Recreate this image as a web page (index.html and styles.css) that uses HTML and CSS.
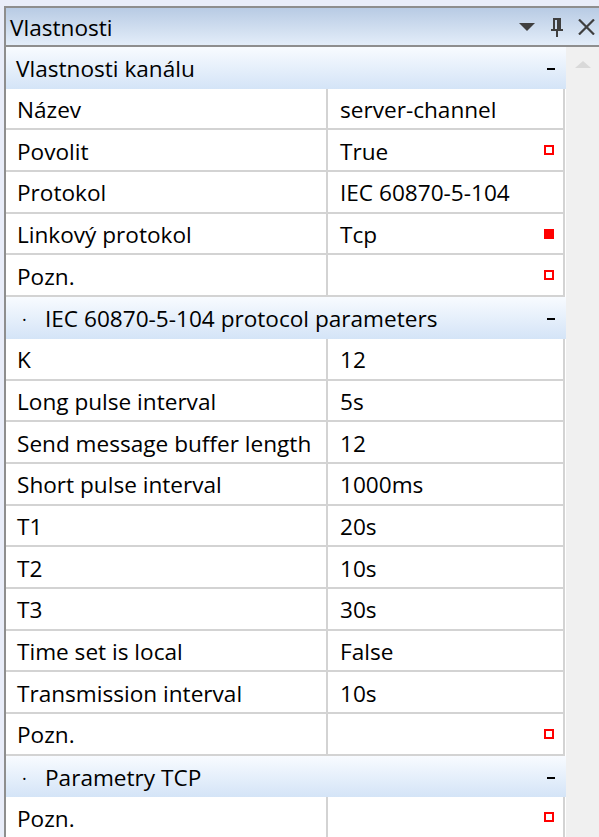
FILE: index.html
```html
<!DOCTYPE html>
<html>
<head>
<meta charset="utf-8">
<link rel="stylesheet" href="styles.css">
</head>
<body>
<div class="window">
  <div class="titlebar">
    <span class="title">Vlastnosti</span>
    <div class="tools">
      <svg class="tool-drop" width="16" height="9" viewBox="0 0 16 9"><path d="M0 0H16L8 8Z" fill="#3f3f3f"/></svg>
      <svg class="tool-pin" width="16" height="20" viewBox="0 0 16 20"><path d="M4 1H12M5 1V12M11 1V12M2 12H14M8 12V19" stroke="#3f3f3f" stroke-width="2" fill="none"/><path d="M9 2V11" stroke="#3f3f3f" stroke-width="2"/></svg>
      <svg class="tool-close" width="17" height="16" viewBox="0 0 17 16"><path d="M1 0.5L16 15.5M16 0.5L1 15.5" stroke="#3f3f3f" stroke-width="2.2"/></svg>
    </div>
  </div>
  <div class="body">
    <div class="grid">
      <div class="cat"><span class="cat-text">Vlastnosti kanálu</span><span class="minus"></span></div>
      <div class="row"><div class="name">Název</div><div class="value">server-channel</div></div>
      <div class="row"><div class="name">Povolit</div><div class="value">True<span class="mark"></span></div></div>
      <div class="row"><div class="name">Protokol</div><div class="value">IEC 60870-5-104</div></div>
      <div class="row"><div class="name">Linkový protokol</div><div class="value">Tcp<span class="mark filled"></span></div></div>
      <div class="row"><div class="name">Pozn.</div><div class="value"><span class="mark"></span></div></div>
      <div class="cat sub"><span class="dot">·</span><span class="cat-text">IEC 60870-5-104 protocol parameters</span><span class="minus"></span></div>
      <div class="row"><div class="name">K</div><div class="value">12</div></div>
      <div class="row"><div class="name">Long pulse interval</div><div class="value">5s</div></div>
      <div class="row"><div class="name">Send message buffer length</div><div class="value">12</div></div>
      <div class="row"><div class="name">Short pulse interval</div><div class="value">1000ms</div></div>
      <div class="row"><div class="name">T1</div><div class="value">20s</div></div>
      <div class="row"><div class="name">T2</div><div class="value">10s</div></div>
      <div class="row"><div class="name">T3</div><div class="value">30s</div></div>
      <div class="row"><div class="name">Time set is local</div><div class="value">False</div></div>
      <div class="row"><div class="name">Transmission interval</div><div class="value">10s</div></div>
      <div class="row"><div class="name">Pozn.</div><div class="value"><span class="mark"></span></div></div>
      <div class="cat sub"><span class="dot">·</span><span class="cat-text">Parametry TCP</span><span class="minus"></span></div>
      <div class="row"><div class="name">Pozn.</div><div class="value"><span class="mark"></span></div></div>
    </div>
    <div class="scroll"><div class="arrow"></div></div>
  </div>
</div>
</body>
</html>
```
FILE: styles.css
```css
html, body {
  margin: 0;
  padding: 0;
  background: #e9edf9;
  width: 599px;
  height: 837px;
  overflow: hidden;
}
body {
  font-family: "Open Sans", "Noto Sans", sans-serif;
  font-size: 22.6px;
  color: #000;
}
.window {
  margin: 6px 0 0 4px;
  border-left: 2px solid #8e8e8e;
  border-top: 2px solid #8e8e8e;
  height: 829px;
  display: flex;
  flex-direction: column;
  background: #fff;
}
.titlebar {
  height: 37px;
  flex: none;
  border-bottom: 2px solid #8e8e8e;
  background: linear-gradient(#b8cbe4, #e3edf9);
  display: flex;
  align-items: center;
  justify-content: space-between;
}
.title {
  padding-left: 4px;
  padding-top: 2px;
}
.tools {
  display: flex;
  align-items: center;
  padding-right: 4px;
}
.tool-drop { margin-right: 14px; margin-top: 2px; }
.tool-pin { margin-right: 13px; margin-top: 2px; }
.body {
  flex: 1;
  display: flex;
  min-height: 0;
}
.grid {
  width: 560px;
  display: flex;
  flex-direction: column;
  background: #fff;
}
.cat {
  height: 41.7px;
  flex: none;
  box-sizing: border-box;
  background: linear-gradient(#f8fbff, #d4e4f7);
  display: flex;
  align-items: center;
  padding-left: 10px;
  padding-right: 11px;
  padding-top: 2px;
}
.cat .dot {
  width: 29px;
  padding-left: 6px;
  box-sizing: border-box;
  font-size: 18px;
}
.cat-text { flex: 1; }
.minus {
  width: 8px;
  height: 2px;
  background: #000;
}
.row {
  height: 41.7px;
  flex: none;
  box-sizing: border-box;
  display: flex;
  border-bottom: 2px solid #d3d3d3;
  border-right: 2px solid #d3d3d3;
  margin-right: 1px;
}
.row .name {
  width: 322px;
  box-sizing: border-box;
  padding-left: 11px;
  padding-top: 2px;
  border-right: 2px solid #d3d3d3;
  display: flex;
  align-items: center;
}
.row .value {
  flex: 1;
  padding-left: 12px;
  padding-right: 9px;
  padding-top: 2px;
  display: flex;
  align-items: center;
  justify-content: space-between;
}
.mark {
  width: 10px;
  height: 10px;
  box-sizing: border-box;
  border: 2px solid #ff0000;
  margin-left: auto;
  margin-top: -2px;
}
.mark.filled {
  background: #ff0000;
}
.scroll {
  flex: 1;
  background: #f0f0f0;
  display: flex;
  justify-content: center;
  padding-top: 14px;
}
.arrow {
  width: 0;
  height: 0;
  border-left: 8px solid transparent;
  border-right: 8px solid transparent;
  border-bottom: 7px solid #d9d9d9;
}
```
